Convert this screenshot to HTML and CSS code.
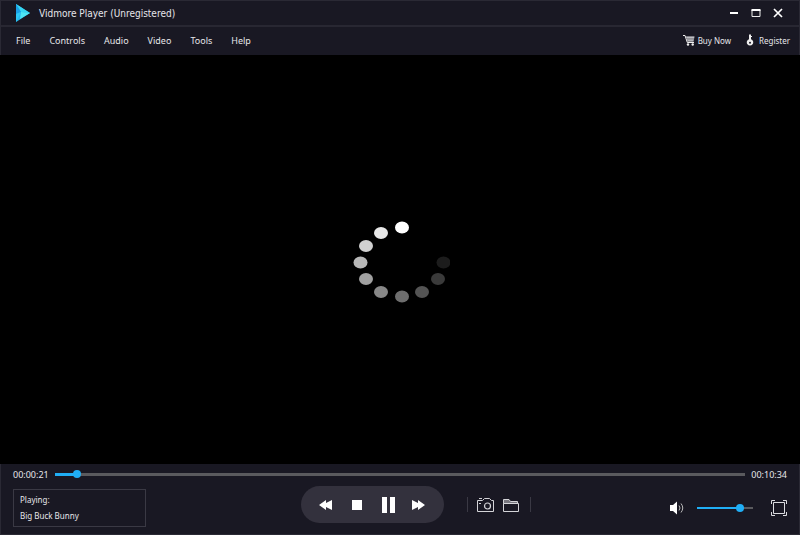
FILE: index.html
```html
<!DOCTYPE html>
<html lang="en">
<head>
    <meta charset="UTF-8">
    <meta name="viewport" content="width=device-width, initial-scale=1.0">
    <title>Vidmore Player</title>
    <link rel="stylesheet" href="styles.css">
</head>
<body>

<div class="player">
    <header class="titlebar">
        <svg class="logo" width="16" height="20" viewBox="0 0 16 20">
            <path d="M1 1L15 10L1 19Z" fill="#25b8ee"/>
            <path d="M1 1L15 10L6 9Z" fill="#35d6f2"/>
            <path d="M1 1L6 9L1 11Z" fill="#1a9fe6"/>
            <path d="M6 9L15 10L5 16Z" fill="#4ee6f4"/>
            <path d="M1 11L6 9L1 19Z" fill="#2cc6f5"/>
        </svg>
        <h1 class="title">Vidmore Player (Unregistered)</h1>
        <div class="window-buttons">
            <button type="button" aria-label="Minimize">
                <svg width="10" height="10" viewBox="0 0 10 10"><path d="M1 5H9" stroke="#fff" stroke-width="2"/></svg>
            </button>
            <button type="button" aria-label="Maximize">
                <svg width="10" height="10" viewBox="0 0 10 10"><path d="M1 2H9V8.5H1Z" fill="none" stroke="#eee"/><path d="M.5 2H9.5" stroke="#fff" stroke-width="2"/></svg>
            </button>
            <button type="button" aria-label="Close">
                <svg width="10" height="10" viewBox="0 0 10 10"><path d="M1 1L9 9M9 1L1 9" stroke="#fff" stroke-width="1.7"/></svg>
            </button>
        </div>
    </header>

    <nav class="menubar">
        <div class="menu">
            <a href="#">File</a>
            <a href="#">Controls</a>
            <a href="#">Audio</a>
            <a href="#">Video</a>
            <a href="#">Tools</a>
            <a href="#">Help</a>
        </div>
        <div class="account">
            <a href="#">
                <svg width="12" height="12" viewBox="0 0 12 12">
                    <path d="M0 1.5H2L4.3 8.5H11" fill="none" stroke="#eee"/>
                    <path d="M3 2.5H11.5L10.5 7.5H4.5Z" fill="#e4e4e8"/>
                    <path d="M3.5 4.2H11M4 5.9H11" stroke="#1a1924" stroke-width=".6"/>
                    <circle cx="5" cy="10.5" r="1.2" fill="#eee"/>
                    <circle cx="9.7" cy="10.5" r="1.2" fill="#eee"/>
                </svg>
                Buy Now
            </a>
            <a href="#">
                <svg width="10" height="12" viewBox="0 0 10 12">
                    <path d="M3 .5H5V5.3A3.2 3.2 0 1 1 3 5.3Z" fill="#eee"/>
                    <path d="M5 2.5H6" stroke="#eee"/>
                    <circle cx="4" cy="8.8" r="1" fill="#1a1924"/>
                </svg>
                Register
            </a>
        </div>
    </nav>

    <main class="screen">
        <svg class="spinner" width="100" height="86" viewBox="0 0 100 86">
            <ellipse cx="52" cy="10.5" rx="7" ry="6" fill="#ffffff"/>
            <ellipse cx="31" cy="16" rx="7" ry="6" fill="#e8e8e8"/>
            <ellipse cx="16" cy="29" rx="7" ry="6" fill="#d0d0d0"/>
            <ellipse cx="10.5" cy="45.5" rx="7" ry="6" fill="#b8b8b8"/>
            <ellipse cx="16" cy="62" rx="7" ry="6" fill="#a0a0a0"/>
            <ellipse cx="31" cy="75" rx="7" ry="6" fill="#888888"/>
            <ellipse cx="52" cy="79.5" rx="7" ry="6" fill="#6e6e6e"/>
            <ellipse cx="72" cy="75" rx="7" ry="6" fill="#545454"/>
            <ellipse cx="88" cy="62" rx="7" ry="6" fill="#3a3a3a"/>
            <ellipse cx="93.5" cy="45.5" rx="7" ry="6" fill="#1c1c1c"/>
        </svg>
    </main>

    <footer class="controls">
        <div class="timeline">
            <label for="seek">00:00:21</label>
            <input class="slider seek" type="range" id="seek" min="0" max="634" value="17" style="--fill: 3%">
            <span>00:10:34</span>
        </div>

        <div class="control-row">
            <div class="now-playing">
                <p>Playing:</p>
                <p>Big Buck Bunny</p>
            </div>

            <div class="middle">
                <div class="transport">
                    <button type="button" aria-label="Rewind">
                        <svg width="14" height="12" viewBox="0 0 14 12"><path d="M0 6L7 1V4L13 1V11L7 8V11Z" fill="#fff"/></svg>
                    </button>
                    <button type="button" aria-label="Stop">
                        <svg width="14" height="10" viewBox="0 0 14 10"><path d="M3 0H13V10H3Z" fill="#fff"/></svg>
                    </button>
                    <button type="button" aria-label="Pause">
                        <svg width="16" height="16" viewBox="0 0 16 16"><path d="M3 0H8V16H3ZM11 0H16V16H11Z" fill="#fff"/></svg>
                    </button>
                    <button type="button" aria-label="Fast forward">
                        <svg width="14" height="12" viewBox="0 0 14 12"><path d="M14 6L7 1V4L1 1V11L7 8V11Z" fill="#fff"/></svg>
                    </button>
                </div>
                <div class="tools">
                    <button type="button" aria-label="Snapshot">
                        <svg width="18" height="16" viewBox="0 0 18 16" fill="none" stroke="#d4d4d8">
                            <path d="M.5 3.5H5.5L7.5 1.5H12.5L14.5 3.5H16.5V14.5H.5Z"/>
                            <path d="M2 1.5H5"/>
                            <circle cx="10.5" cy="9" r="3" stroke-width="1.2"/>
                            <path d="M2 6.5H4"/>
                        </svg>
                    </button>
                    <button type="button" aria-label="Open folder">
                        <svg width="18" height="16" viewBox="0 0 18 16" fill="none" stroke="#d4d4d8">
                            <path d="M.5 14V2.5H6L7.5 4.5H14.5V6" fill="#77767e"/>
                            <path d="M2 6.5H15.5V14.5H.5V6.5Z" fill="#1a1924"/>
                        </svg>
                    </button>
                </div>
            </div>

            <div class="right">
                <button type="button" aria-label="Mute">
                    <svg width="15" height="14" viewBox="0 0 15 14">
                        <path d="M1 4H4L8 .5V13.5L4 10H1Z" fill="#fff"/>
                        <path d="M10 4.5Q12 7 10 9.5M12 2.5Q15.500 7 12 11.5" fill="none" stroke="#bbb"/>
                    </svg>
                </button>
                <input class="slider volume" type="range" aria-label="Volume" min="0" max="100" value="82" style="--fill: 78%">
                <button type="button" aria-label="Full screen">
                    <svg width="16" height="16" viewBox="0 0 16 16" fill="none" stroke="#dcdce0">
                        <path d="M2.5 2.5H13.5V13.5H2.5Z"/>
                        <path d="M.5 4V.5H4M12 .5H15.5V4M15.5 12V15.5H12M4 15.5H.5V12"/>
                    </svg>
                </button>
            </div>
        </div>
    </footer>
</div>

</body>
</html>
```

FILE: styles.css
```css
* {
    box-sizing: border-box;
}
body {
    margin: 0;
    background-color: #191823;
    color: #E6E6EA;
    font-family: "Noto Sans", "Open Sans", sans-serif;
    font-size: 9px;
}
a {
    color: inherit;
    text-decoration: none;
}
button {
    display: flex;
    padding: 0;
    border: none;
    background: none;
}
.player {
    display: flex;
    flex-direction: column;
    min-height: 100vh;
    border: 1px solid #2A2934;
}

/* Title bar and menu */
.titlebar {
    display: flex;
    align-items: center;
    height: 26px;
    padding: 0 16px 0 14px;
    border-bottom: 2px solid #282732;
}
.title {
    margin: 0 0 0 8px;
    font-family: "DejaVu Sans Condensed", "DejaVu Sans", sans-serif;
    font-size: 10px;
    font-weight: normal;
}
.window-buttons {
    display: flex;
    gap: 12px;
    margin-left: auto;
}
.menubar {
    display: flex;
    align-items: center;
    justify-content: space-between;
    height: 28px;
    padding: 0 9px 2px 15px;
}
.menu {
    display: flex;
    gap: 19px;
}
.account {
    display: flex;
    gap: 15px;
    font-size: 8px;
}
.account a {
    display: flex;
    align-items: center;
    gap: 3px;
}

/* Video area */
.screen {
    display: flex;
    flex: 1;
    align-items: center;
    justify-content: center;
    margin: 0 -1px;
    background-color: #000;
}

/* Bottom controls */
.controls {
    padding: 4px 12px 7px;
}
.timeline {
    display: flex;
    align-items: center;
    gap: 6px;
    height: 12px;
}
.slider {
    appearance: none;
    height: 10px;
    margin: 0;
    background: none;
}
.slider::-webkit-slider-runnable-track {
    height: 3px;
    background: linear-gradient(to right, #20AEF5 var(--fill), #5A5A5E var(--fill));
}
.slider::-webkit-slider-thumb {
    appearance: none;
    width: 8px;
    height: 8px;
    margin-top: -3px;
    border-radius: 50%;
    background-color: #20AEF5;
}
.seek {
    flex: 1;
    min-width: 0;
}
.volume {
    width: 56px;
}
.volume::-webkit-slider-runnable-track {
    height: 2px;
}
.control-row {
    display: flex;
    align-items: center;
    justify-content: space-between;
    margin-top: 6px;
}
.now-playing {
    width: 133px;
    margin-top: 3px;
    padding: 2px 6px;
    border: 1px solid #3A3944;
    font-size: 8px;
    line-height: 16px;
}
.now-playing p {
    margin: 0;
}
.middle {
    display: flex;
    align-self: flex-start;
    align-items: center;
    gap: 23px;
    padding-left: 16px;
}
.transport {
    display: flex;
    align-items: center;
    justify-content: space-between;
    width: 143px;
    height: 37px;
    padding: 0 18px;
    border-radius: 19px;
    background-color: #33313D;
}
.tools {
    display: flex;
    align-items: center;
    gap: 8px;
    height: 15px;
    padding: 0 9px;
    border-left: 1px solid #3A3944;
    border-right: 1px solid #3A3944;
}
.right {
    display: flex;
    align-items: center;
    gap: 13px;
    margin-top: 3px;
}
.right button:last-child {
    margin-left: 5px;
}
```
